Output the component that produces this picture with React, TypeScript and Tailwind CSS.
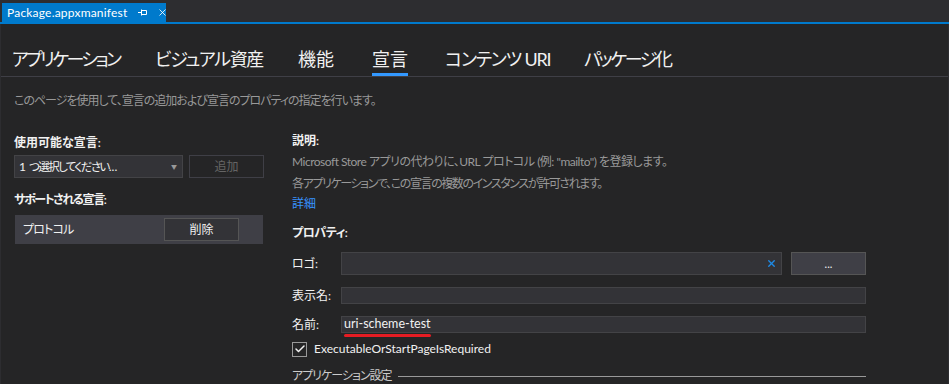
import { Check, X } from 'lucide-react';

const FONT = { fontFamily: 'Lato, "Noto Sans CJK JP", sans-serif' };

const PAGE_TABS = [
  { label: 'アプリケーション', w: 'w-[143px]', track: 'tracking-[-2.6px]' },
  { label: 'ビジュアル資産', w: 'w-[143px]', track: 'tracking-[-1.3px]' },
  { label: '機能', w: 'w-[74px]', track: 'tracking-[0px]' },
  { label: '宣言', w: 'w-[73px]', track: 'tracking-[0px]' },
  { label: 'コンテンツ URI', w: 'w-[139px]', track: 'tracking-[-1.2px]' },
  { label: 'パッケージ化', w: 'w-[120px]', track: 'tracking-[-2.4px]' },
];

export default function App() {
  return (
    <div className="w-[949px] h-[384px] overflow-hidden bg-[#252526] text-[#f1f1f1] text-[12px] [font-feature-settings:'palt']" style={FONT}>
      {/* document tab strip */}
      <div className="h-[22px] bg-[#2d2d30] flex items-end pl-[2px]">
        <div className="h-[19px] w-[164px] bg-[#007acc] flex items-center pl-[5px] text-white text-[12px]">
          <span className="leading-none whitespace-nowrap tracking-[0.2px]">Package.appxmanifest</span>
          <svg width="9" height="7" viewBox="0 0 9 7" className="ml-[10px] shrink-0">
            <path d="M0 3.5H3M3.5 0.5V6.5M4 1.5H8.5V5.5H4" fill="none" stroke="white" strokeWidth="1" />
          </svg>
          <X size={11} strokeWidth={1.8} className="ml-[10px] shrink-0" />
        </div>
      </div>
      <div className="h-[2px] bg-[#007acc]" />

      <div className="border-x border-[#2d2d30] h-[360px]">
        {/* page tabs */}
        <div className="h-[53px] flex items-end pl-[11px] border-b border-[#3f3f46]">
          {PAGE_TABS.map((t) => (
            <div key={t.label} className={`${t.w} shrink-0`}>
              <div className="inline-flex flex-col">
                <span className={`text-[18px] leading-[22px] text-[#f1f1f1] whitespace-nowrap ${t.track}`}>{t.label}</span>
                <div className={`mt-[3px] h-[3px] w-full ${t.label === '宣言' ? 'bg-[#3399ff]' : 'bg-transparent'}`} />
              </div>
            </div>
          ))}
        </div>

        <div className="pl-[13px] pt-[14px] text-[#999999] leading-[20px] tracking-[-1px]">
          このページを使用して、宣言の追加および宣言のプロパティの指定を行います。
        </div>

        <div className="flex mt-[23px]">
          {/* left column */}
          <div className="w-[291px] pl-[13px] shrink-0">
            <div className="font-semibold leading-[18px]">使用可能な宣言:</div>
            <div className="flex mt-[3px]">
              <div className="w-[169px] h-[23px] bg-[#333337] border border-[#434346] flex items-center justify-between pl-[4px] pr-[5px]">
                <span>
                  1 <span className="text-[11.5px] tracking-[-1.6px]">つ選択してください</span>...
                </span>
                <span className="text-[6px] text-[#999999]">▼</span>
              </div>
              <div className="ml-[6px] w-[75px] h-[23px] border border-[#3f3f46] flex items-center justify-center text-[#656565]">
                追加
              </div>
            </div>
            <div className="mt-[13px] font-semibold leading-[18px] tracking-[-1.4px]">サポートされる宣言:</div>
            <div className="mt-[6px] ml-[1px] w-[248px] h-[29px] bg-[#3f3f46] flex items-center justify-between pl-[8px] pr-[24px]">
              <span className="tracking-[-0.8px]">プロトコル</span>
              <div className="w-[75px] h-[23px] bg-[#333337] border border-[#555555] flex items-center justify-center">
                削除
              </div>
            </div>
          </div>

          {/* right column */}
          <div className="w-[574px]">
            <div className="font-semibold leading-[18px] -mt-[2px]">説明:</div>
            <div className="text-[#999999] leading-[22px] mt-[1px]">
              <div className="tracking-[-0.5px]">Microsoft Store アプリの代わりに、URL プロトコル (例: "mailto") を登録します。</div>
              <div className="tracking-[-1.4px]">各アプリケーションで、この宣言の複数のインスタンスが許可されます。</div>
            </div>
            <div className="text-[#3794ff] leading-[18px]">詳細</div>
            <div className="mt-[11px] font-semibold leading-[18px] tracking-[-0.5px]">プロパティ:</div>

            <div className="mt-[10px] flex items-center h-[23px]">
              <span className="w-[49px]">ロゴ:</span>
              <div className="w-[441px] h-[23px] bg-[#333337] border border-[#434346] flex items-center justify-end pr-[4px]">
                <X size={11} strokeWidth={3} className="text-[#1e8ae6]" />
              </div>
              <div className="ml-[9px] w-[75px] h-[23px] bg-[#3f3f46] border border-[#555555] flex items-center justify-center text-[11px] leading-none">
                ...
              </div>
            </div>

            <div className="mt-[12px] flex items-center h-[17px]">
              <span className="w-[49px]">表示名:</span>
              <div className="w-[525px] h-[17px] bg-[#333337] border border-[#434346]" />
            </div>

            <div className="mt-[12px] flex items-center h-[17px]">
              <span className="w-[49px]">名前:</span>
              <div className="w-[525px] h-[17px] bg-[#333337] border border-[#434346] flex items-center pl-[2px]">
                <span className="relative text-[12.5px] leading-none text-[#f1f1f1]">
                  uri-scheme-test
                  <span className="absolute left-0 right-0 -bottom-[6px] h-[3px] rounded-full bg-[#e51c23]" />
                </span>
              </div>
            </div>

            <div className="mt-[7px] flex items-center">
              <div className="w-[15px] h-[15px] border border-[#999999] flex items-center justify-center">
                <Check size={12} strokeWidth={3} className="text-[#f1f1f1]" />
              </div>
              <span className="ml-[7px] text-[#f1f1f1]">ExecutableOrStartPageIsRequired</span>
            </div>

            <div className="mt-[9px] flex items-center w-[574px]">
              <span className="text-[#cccccc] tracking-[-1px]">アプリケーション設定</span>
              <div className="ml-[6px] flex-1 h-px bg-[#999999]" />
            </div>
          </div>
        </div>
      </div>
    </div>
  );
}
